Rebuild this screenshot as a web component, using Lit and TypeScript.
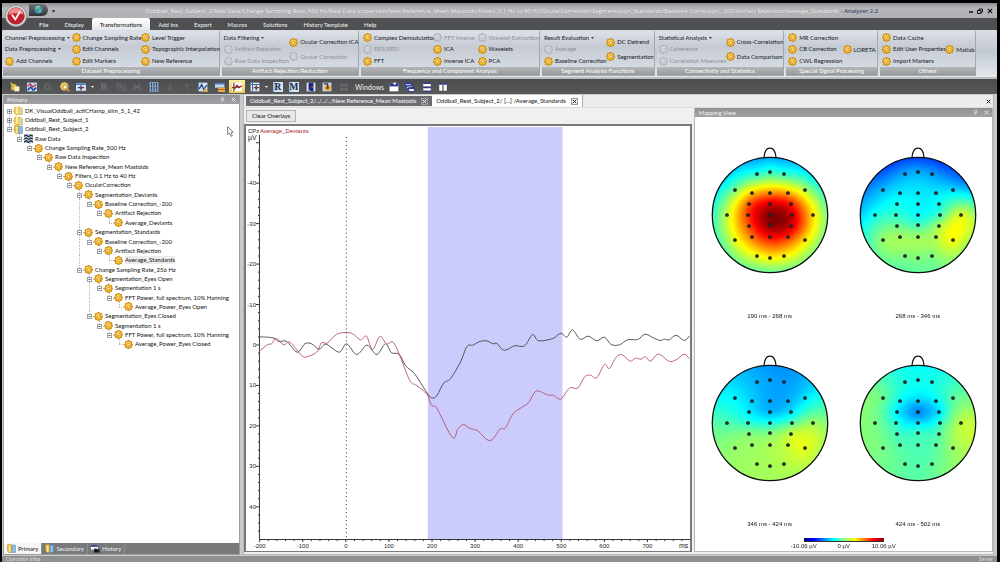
import { LitElement, html, svg, css, nothing } from "lit";
import { customElement, property } from "lit/decorators.js";
import { classMap } from "lit/directives/class-map.js";

type Point = [number, number];

const SENSORS: Point[] = [
  [-13, -41], [0, -43], [14, -41],
  [-35, -25], [-18, -22], [0, -22], [18, -22], [35, -25],
  [-21, -11], [0, -11], [21, -11],
  [-43, 0], [-22, 0], [0, 0], [22, 0], [43, 0],
  [-21, 11], [0, 10], [21, 11],
  [-35, 25], [-18, 22], [0, 22], [18, 22], [35, 25],
  [-13, 41], [0, 43], [14, 41],
];

// Support points on the head outline, clockwise from the nose.
const RIM_ANGLES = [-90, -60, -30, 0, 30, 60, 90, 120, 150, 180, 210, 240];
const RADIUS = 58;
const RIM: Point[] = RIM_ANGLES.map((a) => [
  RADIUS * Math.cos((a * Math.PI) / 180),
  RADIUS * Math.sin((a * Math.PI) / 180),
]);

interface ScalpData {
  label: string;
  sensors: number[];
  rim: number[];
}

const MAPS: ScalpData[] = [
  {
    label: "190 ms - 268 ms",
    sensors: [-0.17, -0.15, -0.15, -0.01, 0.36, 0.48, 0.42, 0.1, 0.58, 0.82, 0.7, 0.13, 0.64, 0.98, 0.84, 0.3,
      0.6, 0.96, 0.84, 0.2, 0.52, 0.74, 0.66, 0.3, 0.22, 0.26, 0.26],
    rim: [-0.42, -0.36, -0.2, -0.02, 0, 0, -0.06, -0.04, -0.1, -0.16, -0.28, -0.38],
  },
  {
    label: "268 ms - 346 ms",
    sensors: [-0.42, -0.42, -0.44, -0.38, -0.29, -0.29, -0.29, -0.32, -0.22, -0.26, -0.22, -0.22, -0.16,
      -0.24, -0.12, 0.18, -0.04, -0.12, 0.08, 0.04, 0.06, 0.06, 0.1, 0.24, 0, 0, 0],
    rim: [-0.63, -0.63, -0.45, 0.04, 0.06, 0, -0.06, -0.06, -0.12, -0.34, -0.52, -0.63],
  },
  {
    label: "346 ms - 424 ms",
    sensors: [-0.4, -0.43, -0.44, -0.26, -0.34, -0.42, -0.4, -0.3, -0.28, -0.39, -0.3, -0.1, -0.16, -0.2,
      -0.08, 0.06, 0.01, 0, 0.14, 0.04, 0.05, 0.08, 0.14, 0.2, 0.07, 0.08, 0.1],
    rim: [-0.46, -0.44, -0.24, 0, 0.1, 0.09, 0.07, 0.06, 0.02, -0.08, -0.26, -0.38],
  },
  {
    label: "424 ms - 502 ms",
    sensors: [-0.2, -0.22, -0.21, -0.05, -0.24, -0.34, -0.26, -0.08, -0.28, -0.48, -0.3, -0.01, -0.18, -0.3,
      -0.16, 0.12, -0.12, -0.14, -0.08, -0.02, -0.09, -0.11, -0.08, 0.05, -0.07, -0.09, -0.06],
    rim: [-0.25, -0.2, -0.05, 0.12, 0.09, 0, -0.07, -0.04, 0, 0.01, 0, -0.16],
  },
];

const kernel = (dx: number, dy: number): number => {
  const r2 = (dx * dx + dy * dy) / (RADIUS * RADIUS);
  return r2 < 1e-9 ? 0 : r2 * Math.log(r2);
};

// Thin-plate spline through the given values.
function spline(points: Point[], values: number[]): (x: number, y: number) => number {
  const n = points.length;
  const size = n + 3;
  const m: number[][] = [];
  for (let i = 0; i < size; i++) m.push(new Array(size + 1).fill(0));
  points.forEach(([x, y], i) => {
    points.forEach(([u, v], j) => (m[i][j] = kernel(x - u, y - v)));
    [1, x / RADIUS, y / RADIUS].forEach((t, k) => {
      m[i][n + k] = t;
      m[n + k][i] = t;
    });
    m[i][size] = values[i];
  });
  for (let c = 0; c < size; c++) {
    let p = c;
    for (let r = c + 1; r < size; r++) if (Math.abs(m[r][c]) > Math.abs(m[p][c])) p = r;
    [m[c], m[p]] = [m[p], m[c]];
    for (let r = 0; r < size; r++) {
      if (r === c) continue;
      const f = m[r][c] / m[c][c];
      if (f) for (let k = c; k <= size; k++) m[r][k] -= f * m[c][k];
    }
  }
  const w = m.map((row, i) => row[size] / row[i]);
  return (x, y) => {
    let s = w[n] + (w[n + 1] * x) / RADIUS + (w[n + 2] * y) / RADIUS;
    for (let i = 0; i < n; i++) s += w[i] * kernel(x - points[i][0], y - points[i][1]);
    return s;
  };
}

function jet(value: number): [number, number, number] {
  const t = Math.max(0, Math.min(1, (value + 1) / 2)) * 4;
  const ramp = (c: number) => Math.round(255 * Math.max(0, Math.min(1, 1.5 - Math.abs(t - c))));
  return [ramp(3), ramp(2), ramp(1)];
}

@customElement("scalp-map")
class ScalpMap extends LitElement {
  @property({ attribute: false }) data!: ScalpData;

  static styles = css`
    :host { display: grid; justify-items: center; align-content: start; }
    .head { display: grid; width: 120px; }
    .field { grid-area: 1 / 1; width: 116px; height: 116px; margin: 12px 2px 2px; border-radius: 50%; }
    .outline { grid-area: 1 / 1; width: 120px; height: 130px; }
    .label { font: 6px/8px "Liberation Sans", Arial, sans-serif; color: #111; margin-top: 37px; }
  `;

  firstUpdated() {
    const canvas = this.renderRoot.querySelector("canvas")!;
    const ctx = canvas.getContext("2d")!;
    const image = ctx.createImageData(116, 116);
    const field = spline([...SENSORS, ...RIM], [...this.data.sensors, ...this.data.rim]);
    for (let y = 0; y < 116; y++) {
      for (let x = 0; x < 116; x++) {
        const [r, g, b] = jet(field(x + 0.5 - RADIUS, y + 0.5 - RADIUS));
        image.data.set([r, g, b, 255], (y * 116 + x) * 4);
      }
    }
    ctx.putImageData(image, 0, 0);
  }

  render() {
    return html`
      <div class="head">
        <canvas class="field" width="116" height="116"></canvas>
        <svg class="outline" viewBox="-60 -70 120 130" fill="none" stroke="#111" stroke-width="1.3">
          <circle r="57.7" />
          <path d="M-6 -57.5C-5 -70 5 -70 6 -57.5" />
          ${SENSORS.map(([x, y]) => svg`<circle cx=${x} cy=${y} r="1.3" fill="#555" stroke-width="1.1" />`)}
        </svg>
      </div>
      <span class="label">${this.data.label}</span>
    `;
  }
}

const BLACK_WAVE: Point[] = [
  [13, 211.3], [27, 212.3], [33, 216], [40.7, 216], [51.3, 226.7], [59, 218.3], [65.7, 218.3], [73.3, 223.7],
  [80, 218.7], [93.3, 226.7], [100.7, 218.3], [110.7, 229], [120, 220], [124, 221.7], [131.3, 229],
  [139.7, 218.3], [145.7, 227.3], [153.3, 228.7], [159.7, 240], [167.3, 246.7], [172.3, 253.3], [182.3, 269],
  [186.7, 272.7], [191.3, 270], [198, 257.7], [204.7, 253.3], [214.7, 236.7], [221.3, 221], [227.3, 219.7],
  [233.3, 216.3], [240.7, 215.3], [247.3, 218.3], [251.3, 218], [256.7, 224], [261.3, 224.3], [269, 220.3],
  [279, 220.3], [287, 209], [293, 215.3], [307.3, 213], [315.3, 207.7], [321.3, 211.7], [327, 204.3],
  [334.7, 213.7], [342.7, 210.7], [351.3, 215.3], [359, 211.7], [365.7, 219], [374, 219.3], [382.3, 214.3],
  [392.3, 214], [399.7, 208.7], [407.3, 212], [414.7, 215], [419, 213.7], [424, 214.3], [430.7, 209.7],
  [439, 215], [444, 210.3],
];

const RED_WAVE: Point[] = [
  [13, 226.3], [21.3, 219.3], [25.7, 218.3], [30, 213], [38, 219.3], [44, 216.7], [55.7, 230], [60.7, 231.3],
  [70.7, 226.7], [75.7, 217.3], [81.3, 217.7], [89, 210], [95.7, 207.3], [105.7, 207.7], [114.7, 214.3],
  [120.7, 210.7], [126.7, 224], [134, 211], [140.7, 218.3], [147.3, 216.7], [154, 230], [164, 255],
  [170.7, 260], [181.3, 269], [185.7, 280], [191.3, 283.3], [206.7, 312.3], [212.3, 303.3], [218, 299.3],
  [224, 303], [232.3, 305.7], [240.7, 314], [246.7, 314.3], [254.7, 303.7], [259.7, 302.7], [267.3, 288.7],
  [276.7, 281.7], [283, 277.3], [290.7, 265.7], [302.3, 269.7], [308, 270], [315.3, 273.7], [324, 262.7],
  [332.3, 262.7], [339, 251.7], [344.7, 249.7], [351.3, 252.3], [359, 239], [364, 243], [370.7, 231.7],
  [376.7, 229.3], [384.7, 235.7], [390, 232.7], [395.7, 233.7], [400, 231.3], [405, 235.7], [411.3, 229.3],
  [415.7, 229.7], [424, 236], [430.7, 234.3], [439, 228.7], [444, 233.3],
];

function smooth(points: Point[]): string {
  let d = `M${points[0].join(" ")}`;
  for (let i = 0; i < points.length - 1; i++) {
    const a = points[Math.max(0, i - 1)];
    const b = points[i];
    const c = points[i + 1];
    const e = points[Math.min(points.length - 1, i + 2)];
    d += `C${b[0] + (c[0] - a[0]) / 6} ${b[1] + (c[1] - a[1]) / 6} ${c[0] - (e[0] - b[0]) / 6} ${
      c[1] - (e[1] - b[1]) / 6
    } ${c[0]} ${c[1]}`;
  }
  return d;
}

@customElement("wave-plot")
class WavePlot extends LitElement {
  static styles = css`
    :host { display: block; min-height: 0; background: #fff; }
    .plot { display: block; width: 100%; height: 100%; font: 6px "Liberation Sans", Arial, sans-serif; fill: #222; }
    .unit { font-size: 7px; }
    .deviant { fill: #a81c30; }
    .end { text-anchor: end; }
    .mid { text-anchor: middle; }
    .line { fill: none; stroke-width: 0.9; }
    .axis { stroke: #333; stroke-width: 1; fill: none; }
  `;

  render() {
    const x = (ms: number) => 100 + ms * 0.4315;
    const y = (uv: number) => 219.5 + uv * 4.055;
    const xTicks = Array.from({ length: 50 }, (_, i) => -200 + i * 20);
    const yTicks = Array.from({ length: 49 }, (_, i) => -50 + i * 2);
    return html`
      <svg class="plot" viewBox="0 0 445 426" preserveAspectRatio="none" role="img" aria-label="CPz waveforms">
        <rect x="182" y="1" width="135" height="413" fill="#cbcbfc" />
        <path class="axis" stroke-dasharray="1 3" d="M100.5 11V414" />
        <path class="axis" d="M13.5 9V414.5H445" />
        <path class="axis" d=${yTicks.map((v) => `M${v % 10 ? 12 : 10} ${y(v)}H13`).join("")} />
        <path class="axis" d=${xTicks.filter((v) => v < 800).map((v) => `M${x(v)} 414V${v % 100 ? 416 : 417}`).join("")} />
        <path class="line" stroke="#444" d=${smooth(BLACK_WAVE)} />
        <path class="line" stroke="#b4506c" d=${smooth(RED_WAVE)} />
        <text x="2" y="7">CPz</text>
        <text class="deviant" x="14" y="7">Average_Deviants</text>
        <text class="unit" x="2" y="14">µV</text>
        ${[-40, -30, -20, -10, 0, 10, 20, 30, 40].map(
          (v) => svg`<text class="end" x="10" y=${y(v) + 2}>${v}</text>`,
        )}
        ${[-200, -100, 0, 100, 200, 300, 400, 500, 600, 700].map(
          (v) => svg`<text class="mid" x=${x(v)} y="423">${v}</text>`,
        )}
        <text class="unit end" x="443" y="423">ms</text>
      </svg>
    `;
  }
}

const gear = (off = false) => html`<svg class="gear" viewBox="-8 -8 16 16" aria-hidden="true">
  <g fill=${off ? "#a9adb4" : "#c4850f"}>
    ${[0, 45, 90, 135].map((a) => svg`<rect x="-2" y="-7.8" width="4" height="15.6" rx="1" transform="rotate(${a})" />`)}
    <circle r="6.2" />
  </g>
  <circle r="5.6" fill=${off ? "#cdd0d5" : "#f7b92c"} />
  <path d="M-3.8 -1A4 4 0 0 1 2 -3.6" fill="none" stroke=${off ? "#e6e8ea" : "#ffe48a"} stroke-width="1.6" />
  <circle r="2.3" fill=${off ? "#e8eaed" : "#fdf6dc"} stroke=${off ? "#a5a9b0" : "#b87c10"} stroke-width="1" />
</svg>`;

interface Command {
  text: string;
  off?: boolean;
  menu?: boolean;
}
interface Group {
  name: string;
  size: number;
  columns: { size: number; items: Command[] }[];
}
const on = (text: string): Command => ({ text });
const off = (text: string): Command => ({ text, off: true });
const menu = (text: string): Command => ({ text, menu: true });

const GROUPS: Group[] = [
  {
    name: "Dataset Preprocessing", size: 218, columns: [
      { size: 67, items: [menu("Channel Preprocessing"), menu("Data Preprocessing"), on("Add Channels")] },
      { size: 70, items: [on("Change Sampling Rate"), on("Edit Channels"), on("Edit Markers")] },
      { size: 78, items: [on("Level Trigger"), on("Topographic Interpolation"), on("New Reference")] },
    ],
  },
  {
    name: "Artifact Rejection/Reduction", size: 138, columns: [
      { size: 67, items: [menu("Data Filtering"), off("Artifact Rejection"), off("Raw Data Inspection")] },
      { size: 70, items: [on("Ocular Correction ICA"), off("Ocular Correction")] },
    ],
  },
  {
    name: "Frequency and Component Analysis", size: 180, columns: [
      { size: 71, items: [on("Complex Demodulation"), off("ERS/ERD"), on("FFT")] },
      { size: 45, items: [off("FFT Inverse"), on("ICA"), on("Inverse ICA")] },
      { size: 62, items: [off("Wavelet Extraction"), on("Wavelets"), on("PCA")] },
    ],
  },
  {
    name: "Segment Analysis Functions", size: 113, columns: [
      { size: 63, items: [menu("Result Evaluation"), off("Average"), on("Baseline Correction")] },
      { size: 48, items: [on("DC Detrend"), on("Segmentation")] },
    ],
  },
  {
    name: "Connectivity and Statistics", size: 128, columns: [
      { size: 68, items: [menu("Statistical Analysis"), off("Coherence"), off("Correlation Measures")] },
      { size: 58, items: [on("Cross-Correlation"), on("Data Comparison")] },
    ],
  },
  {
    name: "Special Signal Processing", size: 92, columns: [
      { size: 55, items: [on("MR Correction"), on("CB Correction"), on("CWL Regression")] },
      { size: 35, items: [on("LORETA")] },
    ],
  },
  {
    name: "Others", size: 96, columns: [
      { size: 64, items: [on("Data Cache"), on("Edit User Properties"), on("Import Markers")] },
      { size: 30, items: [on("Matlab")] },
    ],
  },
];

@customElement("ribbon-bar")
class RibbonBar extends LitElement {
  static styles = css`
    :host {
      display: flex; gap: 2px; height: 49px; box-sizing: border-box; padding: 1px 21px 1px 1px; border-radius: 3px;
      background: linear-gradient(#d9dde3, #c3c9d2 45%, #e3e8ee);
      border-bottom: 2px solid #b9bcc0;
    }
    .group {
      display: flex; flex-direction: column; min-width: 0; box-sizing: border-box;
      border-right: 1px solid #a4a8ae; border-bottom: 1px solid #a4a8ae;
      background: linear-gradient(#dde1e7, #c5cad3 35%, #dbe1e8);
    }
    .columns { flex: 1; display: grid; padding: 1px 0 0 2px; min-height: 0; }
    .column { display: flex; flex-direction: column; justify-content: space-around; min-width: 0; }
    .pair { padding: 3px 0; }
    .command {
      display: flex; align-items: center; gap: 2px; height: 10px; padding: 0; border: 0; background: none;
      font: inherit; color: #14161f; white-space: nowrap; text-align: left;
    }
    .off { color: #8c9097; }
    .gear { width: 9px; height: 9px; flex: none; }
    .arrow { width: 3px; height: 2px; fill: #444; }
    .name {
      height: 8px; line-height: 8px; text-align: center; color: #fff; white-space: nowrap;
      background: linear-gradient(#b4b6b9, #989a9d);
    }
  `;

  render() {
    return GROUPS.map(
      (g) => html`<section class="group" style="flex:${g.size} 1 0" aria-label=${g.name}>
        <div class="columns" style="grid-template-columns:${g.columns.map((c) => `minmax(0,${c.size}fr)`).join(" ")}">
          ${g.columns.map(
            (c) => html`<div class=${classMap({ column: true, pair: c.items.length === 2 })}>
              ${c.items.map(
                (i) => html`<button class=${classMap({ command: true, off: !!i.off })} ?disabled=${!!i.off}>
                  ${i.menu ? nothing : gear(i.off)}<span>${i.text}</span>${
                    i.menu ? html`<svg class="arrow" viewBox="0 0 6 4"><path d="M0 0H6L3 4Z" /></svg>` : nothing
                  }
                </button>`,
              )}
            </div>`,
          )}
        </div>
        <div class="name">${g.name}</div>
      </section>`,
    );
  }
}

interface Node {
  level: number;
  text: string;
  icon: "folder" | "open" | "raw" | "gear";
  box?: "+" | "-";
  selected?: boolean;
}
const step = (level: number, text: string): Node => ({ level, text, icon: "gear", box: "-" });
const leaf = (level: number, text: string, selected = false): Node => ({ level, text, icon: "gear", selected });

const TREE: Node[] = [
  { level: 0, text: "DK_VisualOddball_actiCHamp_slim_5_1_42", icon: "folder", box: "+" },
  { level: 0, text: "Oddball_Rest_Subject_1", icon: "folder", box: "+" },
  { level: 0, text: "Oddball_Rest_Subject_2", icon: "open", box: "-" },
  { level: 1, text: "Raw Data", icon: "raw", box: "-" },
  step(2, "Change Sampling Rate_500 Hz"),
  step(3, "Raw Data Inspection"),
  step(4, "New Reference_Mean Mastoids"),
  step(5, "Filters_0.1 Hz to 40 Hz"),
  step(6, "OcularCorrection"),
  step(7, "Segmentation_Deviants"),
  step(8, "Baseline Correction_-200"),
  step(9, "Artifact Rejection"),
  leaf(10, "Average_Deviants"),
  step(7, "Segmentation_Standards"),
  step(8, "Baseline Correction_-200"),
  step(9, "Artifact Rejection"),
  leaf(10, "Average_Standards", true),
  step(7, "Change Sampling Rate_256 Hz"),
  step(8, "Segmentation_Eyes Open"),
  step(9, "Segmentation 1 s"),
  step(10, "FFT Power, full spectrum, 10% Hanning"),
  leaf(11, "Average_Power_Eyes Open"),
  step(8, "Segmentation_Eyes Closed"),
  step(9, "Segmentation 1 s"),
  step(10, "FFT Power, full spectrum, 10% Hanning"),
  leaf(11, "Average_Power_Eyes Closed"),
];

const hasNext = (index: number, level: number): boolean => {
  const next = TREE.slice(index + 1).find((n) => n.level <= level);
  return !!next && next.level === level;
};

const book = html`<svg class="gear" viewBox="0 0 16 16" aria-hidden="true">
  <path d="M1 1H8V15H3L1 12Z" fill="#f4c33c" stroke="#b58a22" />
  <path d="M9 2H15V15H9Z" fill="#8cc3e8" stroke="#4f86b4" /><path d="M5 3V14" stroke="#fff3b8" stroke-width="2" />
</svg>`;

const NODE_ICONS = {
  gear: gear(),
  open: book,
  folder: html`<svg class="gear" viewBox="0 0 16 16" aria-hidden="true">
    <path d="M1 2H11L15 5V15H3L1 13Z" fill="#f6cf4e" stroke="#c79a28" />
    <path d="M5 2V14" stroke="#fff2b0" stroke-width="3" /><path d="M11 4H14V14H11Z" fill="#bcd9ee" />
  </svg>`,
  raw: html`<svg class="gear" viewBox="0 0 16 16" aria-hidden="true">
    <rect width="16" height="16" fill="#b9c6d6" />
    <path d="M0 4L4 2L8 5L12 2L16 4M0 9L4 7L8 10L12 7L16 9M0 14L4 12L8 15L12 12L16 14" fill="none" stroke="#1d2c44" stroke-width="2" />
  </svg>`,
};

@customElement("node-tree")
class NodeTree extends LitElement {
  static styles = css`
    :host { display: block; }
    .tree { display: grid; grid-auto-rows: 1fr; height: 243px; margin: 0; padding: 2px 0 0; list-style: none; }
    .row { display: flex; align-items: center; white-space: nowrap; color: #111; }
    .cell { width: 10px; height: 10px; margin: -1px 0; flex: none; }
    .guide { stroke: #b5b5b5; stroke-width: 1; fill: none; stroke-dasharray: 1 1; }
    .box { fill: #fff; stroke: #9aa1a8; }
    .gear { width: 9px; height: 9px; flex: none; }
    .text { margin-left: 2px; }
    .selected { background: #ebebeb; }
  `;

  render() {
    return html`<ul class="tree" role="tree">
      ${TREE.map(
        (n, i) => html`<li class="row" role="treeitem" aria-level=${n.level + 1}>
          ${Array.from({ length: n.level }, (_, l) => html`<svg class="cell" viewBox="0 0 10 10">
            ${hasNext(i, l) ? svg`<path class="guide" d="M5.5 0V10" />` : nothing}
          </svg>`)}
          <svg class="cell" viewBox="0 0 10 10">
            <path class="guide" d="M5.5 ${i ? 0 : 5}V${hasNext(i, n.level) ? 10 : 5}M5 5.5H10" />
            ${n.box
              ? svg`<rect class="box" x="3.5" y="3.5" width="4" height="4" />
                <path d="M4.5 5.5H6.5${n.box === "+" ? "M5.5 4.5V6.5" : ""}" stroke="#333" stroke-width=".8" />`
              : nothing}
          </svg>
          ${NODE_ICONS[n.icon]}<span class=${classMap({ text: true, selected: !!n.selected })}>${n.text}</span>
        </li>`,
      )}
    </ul>`;
  }
}

const wave = svg`<rect x="1" y="1" width="14" height="14" fill="#cfe4f7" /><path d="M2 11L6 4L9 12L14 5" fill="none" stroke="#1b3e86" stroke-width="2" />`;
const letter = (fill: string, back: string) => svg`<rect x="0" y="0" width="16" height="16" fill=${back} /><rect x="0" y="0" width="3" height="16" fill=${fill} opacity=".35" />`;

interface Tool {
  name: string;
  art?: unknown;
  glyph?: string;
  dim?: boolean;
  active?: boolean;
  arrow?: boolean;
  label?: boolean;
}

const TOOLS: Tool[] = [
  { name: "Open", art: svg`<path d="M2 3H8L10 5V13H2Z" fill="#e8b53c" /><path d="M7 7H15V15H7Z" fill="#fdf3cf" /><path d="M1 1L6 6" stroke="#c6d63c" stroke-width="2" />` },
  { name: "Overlay", art: svg`<rect x="0" y="1" width="16" height="14" fill="#bcd4ee" /><path d="M1 7L5 3L9 8L15 4" fill="none" stroke="#c22a2a" stroke-width="2" /><path d="M1 13L6 8L10 13L15 9" fill="none" stroke="#1f4aa4" stroke-width="2.4" />` },
  { name: "Search", dim: true, art: svg`<circle cx="7" cy="7" r="4" fill="none" stroke="#8a8a8a" stroke-width="2" /><path d="M10 10L14 14" stroke="#8a8a8a" stroke-width="2" />` },
  { name: "Zoom", art: svg`<circle cx="7" cy="7" r="6.6" fill="#f4ca62" /><circle cx="8" cy="8" r="3.6" fill="#fff6da" stroke="#b07c24" stroke-width="1.4" /><path d="M11 11L15 15" stroke="#d59a3c" stroke-width="2.4" />` },
  { name: "Fit view", art: svg`<rect x="0" y="2" width="16" height="12" fill="#d8e8f8" /><rect x="0" y="2" width="16" height="3" fill="#5386c8" /><path d="M8 5V13M3 9H13" stroke="#20407c" stroke-width="2" /><circle cx="8" cy="9" r="2" fill="#c83030" />` },
  { name: "Fit options", arrow: true },
  { name: "Reset", dim: true, glyph: "R" },
  { name: "Segments", dim: true, art: svg`<path d="M1 2H7V8H1ZM9 8H15V14H9ZM1 14L15 2" fill="#5c6064" stroke="#8b9096" stroke-width="1.4" />` },
  { name: "Markers", dim: true, art: svg`<path d="M2 3L8 8L14 3M2 13L8 8L14 13M3 8H13" fill="none" stroke="#8b9096" stroke-width="2" />` },
  { name: "Channels", art: svg`<rect x="1" y="0" width="14" height="16" fill="#8fa9c6" /><path d="M4 1V15M8 1V15M12 1V15" stroke="#26405f" stroke-width="1.8" stroke-dasharray="5 1" />` },
  { name: "Down", dim: true, art: svg`<path d="M8 2V13M4 9L8 13L12 9" fill="none" stroke="#7f8a5c" stroke-width="2" />` },
  { name: "Up", dim: true, art: svg`<path d="M8 14V3M4 7L8 3L12 7" fill="none" stroke="#7f8a5c" stroke-width="2" />` },
  { name: "Peak view", art: svg`${wave}<path d="M11 8L16 16H9Z" fill="#e8a93a" />` },
  { name: "Grid view", art: svg`<rect x="0" y="2" width="15" height="7" fill="#bfdaf2" /><path d="M0 3H15" stroke="#386cb4" stroke-width="2" /><rect x="5" y="9" width="11" height="7" fill="#f0a93a" /><path d="M5 12H16" stroke="#7c4710" />` },
  { name: "Mapping view", active: true, art: svg`<rect x="0" y="1" width="16" height="14" fill="#fff" /><path d="M3 1V15" stroke="#222" stroke-width="1.6" /><path d="M0 9H4L8 5L11 9L16 6" fill="none" stroke="#b02020" stroke-width="2" /><path d="M4 11L8 8L12 8" fill="none" stroke="#222" stroke-width="1.6" />` },
  { name: "Scale view", art: svg`<rect x="1" y="1" width="14" height="14" fill="#dce9f6" /><path d="M4 1V15M1 4H15" stroke="#3a6cae" stroke-width="1.6" /><path d="M10 5V13M6 9H14" stroke="#4b2b50" stroke-width="2" /><circle cx="10" cy="9" r="1.6" fill="#d03030" />` },
  { name: "Scale options", arrow: true },
  { name: "R view", art: letter("#3b79c4", "#d5e6f6"), glyph: "R" },
  { name: "M view", art: letter("#3b79c4", "#d5e6f6"), glyph: "M" },
  { name: "Door", art: svg`<rect x="1" y="1" width="14" height="14" fill="#dbe6f4" /><path d="M4 1H12V15L4 13Z" fill="#182a78" /><circle cx="10" cy="8" r="1.4" fill="#e05050" />` },
  { name: "Swap", art: svg`<rect x="1" y="1" width="14" height="14" fill="#cadcf0" /><circle cx="9" cy="9" r="5" fill="#eaa52c" /><path d="M3 3H9V7" fill="none" stroke="#23395c" stroke-width="2" /><circle cx="9" cy="9" r="2" fill="#5c3c10" />` },
  { name: "Tiles", dim: true, art: svg`<path d="M2 2H7V7H2ZM9 2H14V7H9ZM2 9H7V14H2ZM9 9H14V14H9Z" fill="#8b9096" />` },
  { name: "Windows", label: true },
  { name: "New window", art: svg`<rect x="1" y="3" width="14" height="12" fill="#fff" /><path d="M1 5H15" stroke="#2233a0" stroke-width="4" /><path d="M7 1H11V4H7Z" fill="#fff" />` },
  { name: "Cascade", art: svg`<g fill="#fff" stroke="#2a3494" stroke-width="1.4"><rect x="1" y="1" width="9" height="6" /><rect x="3" y="5" width="9" height="6" /><rect x="6" y="9" width="9" height="6" /></g><path d="M1 2H10M3 6H12M6 10H15" stroke="#2a3494" stroke-width="2" />` },
  { name: "Tile rows", art: svg`<rect x="2" y="2" width="12" height="5" fill="#fff" /><rect x="2" y="9" width="12" height="5" fill="#fff" /><path d="M2 2H14M2 9H14M2 15H14" stroke="#2a3494" stroke-width="2" />` },
  { name: "Tile columns", art: svg`<rect x="2" y="3" width="5" height="11" fill="#fff" /><rect x="9" y="3" width="5" height="11" fill="#fff" /><path d="M2 3H7M9 3H14" stroke="#2a3494" stroke-width="3" />` },
];

@customElement("tool-strip")
class ToolStrip extends LitElement {
  static styles = css`
    :host { display: flex; height: 15px; padding-left: 6px; background: linear-gradient(#4c4d4f, #56585a); }
    .tools { display: flex; align-items: center; justify-content: space-between; width: 442px; }
    .tool { display: grid; place-items: center; width: 14px; height: 13px; padding: 0; border: 0; background: none; }
    .art { width: 10px; height: 10px; }
    .dim { opacity: 0.4; }
    .active { width: 16px; background: linear-gradient(#fff0a8, #f3c545); }
    .arrow { width: 4px; }
    .label { color: #f0f0f0; font-size: 7px; width: 26px; margin: 0 3px 0 2px; }
    .glyph { font: bold 15px "Liberation Serif", serif; text-anchor: middle; }
  `;

  render() {
    return html`<div class="tools" role="toolbar">
      ${TOOLS.map((t) => {
        if (t.label) return html`<span class="label">${t.name}</span>`;
        if (t.arrow) {
          return html`<button class="tool arrow" aria-label=${t.name}>
            <svg width="3" height="2" viewBox="0 0 6 4"><path d="M0 0H6L3 4Z" fill="#eee" /></svg>
          </button>`;
        }
        return html`<button class=${classMap({ tool: true, dim: !!t.dim, active: !!t.active })} aria-label=${t.name}>
          <svg class="art" viewBox="0 0 16 16">
            ${t.art ?? nothing}
            ${t.glyph ? svg`<text class="glyph" x="8" y="13" fill=${t.dim ? "#a7acb2" : "#182440"}>${t.glyph}</text>` : nothing}
          </svg>
        </button>`;
      })}
    </div>`;
  }
}

const cross = svg`<path d="M1 1L6 6M6 1L1 6" stroke="currentColor" stroke-width="1.4" fill="none" />`;
const pin = svg`<path d="M2 0V4M5 0V4M1 4H6M2 0H5M3.5 4V7" stroke="currentColor" stroke-width=".8" fill="none" />`;

@customElement("app-root")
class AppRoot extends LitElement {
  static styles = css`
    :host {
      display: block; box-sizing: border-box; height: 100vh; padding: 3px 3px 0 2px; overflow: hidden; background: #000;
      font: 6px/8px Lato, "Noto Sans", sans-serif; color: #111;
    }
    .window { display: flex; flex-direction: column; height: 100%; background: #c9cacc; position: relative; }
    button { font: inherit; }
    .titlebar {
      display: flex; align-items: center; height: 15px; padding-right: 3px;
      background: linear-gradient(#8d9094, #b4b6b9 35%, #b0b2b5);
    }
    .quick {
      display: flex; align-items: center; justify-content: center; width: 19px; height: 12px; margin: 0 0 2px 27px;
      border-radius: 0 7px 7px 0; background: linear-gradient(#6d7276, #303437);
    }
    .globe { width: 9px; height: 9px; }
    .quickarrow { width: 10px; text-align: center; color: #333; }
    .title {
      flex: 1; min-width: 0; margin: 0; font-family: "Open Sans", "Noto Sans", sans-serif; font-size: 6px; font-weight: 400;
      line-height: 12px; text-align: center; color: #fff; text-shadow: 0 0 1px #777; white-space: nowrap; overflow: hidden;
    }
    .product { color: #1b2f55; text-shadow: none; }
    .controls { display: flex; gap: 2px; }
    .control { display: grid; place-items: center; width: 8px; height: 9px; padding: 0; border: 0; background: none; color: #111; }
    .orb { position: absolute; left: 3px; top: 2px; width: 22px; height: 22px; padding: 0; border: 0; background: none; }
    .menu { display: flex; align-items: stretch; height: 12px; padding-left: 29px; background: #4e5052; }
    .tab { padding: 0 8px; color: #f4f4f4; text-decoration: none; line-height: 13px; }
    .current { color: #111; background: linear-gradient(#fff, #e4e7eb); border-radius: 2px 2px 0 0; }
    .workspace { flex: 1; display: grid; grid-template-columns: 24fr 76fr; gap: 3px; min-height: 0; padding: 1px 3px 1px 1px; }
    .side { display: flex; flex-direction: column; min-height: 0; border: 1px solid #9b9da0; border-top: 0; background: #fff; }
    .panehead {
      display: flex; align-items: center; gap: 6px; height: 9px; padding: 0 3px;
      background: linear-gradient(#8f9194, #a0a2a4); color: #f2f2f2;
    }
    .panehead > span { flex: 1; }
    .mini { width: 5px; height: 5px; }
    .grow { flex: 1; min-height: 0; }
    .sidetabs { display: flex; height: 11px; background: #77797b; }
    .sidetab {
      display: flex; align-items: center; gap: 2px; padding: 0 3px; border: 0; border-right: 1px solid #8e9092;
      background: none; color: #f0f0f0;
    }
    .chosen { background: #f6f6f6; color: #111; }
    .gear { width: 9px; height: 9px; }
    .document {
      display: flex; flex-direction: column; min-width: 0; min-height: 0; padding-bottom: 2px;
      background: #f0f0f0; border: 1px solid #b5b7b9; border-top: 0;
    }
    .doctabs { display: flex; align-items: center; height: 12px; padding: 0 2px; background: #ececec; border-bottom: 1px solid #dcdcdc; }
    .doctab { display: flex; align-items: center; gap: 5px; height: 10px; padding: 0 4px; border: 0; background: #6b6d70; color: #fff; white-space: nowrap; }
    .front { background: #fff; color: #111; border-right: 1px solid #aaa; height: 12px; }
    .close { display: grid; place-items: center; width: 5px; height: 5px; border: 1px solid #9a9a9a; }
    .spacer { flex: 1; }
    .panes { flex: 1; display: grid; grid-template-columns: 449fr 299fr; gap: 2px; min-height: 0; }
    .left { display: flex; flex-direction: column; min-height: 0; }
    .actions { height: 16px; padding: 2px 2px 0; box-sizing: border-box; }
    .clear { display: block; height: 12px; padding: 0 5px; border: 1px solid #b4b4b4; background: #e9e9e9; color: #111; line-height: 10px; }
    .plotframe { flex: 1; min-height: 0; display: grid; border: 1px solid #77797c; border-width: 2px 2px 1px 2px; }
    .mapping { display: flex; flex-direction: column; min-height: 0; background: #fff; border: 1px solid #b5b7b9; border-width: 0 1px 1px; }
    .maps { flex: 1; display: grid; grid-template: repeat(2, 208px) / 1fr 1fr; padding: 28px 0 0; min-height: 0; }
    .legend {
      display: grid; grid-template-columns: 40px 40px 40px; justify-content: center; justify-items: center;
      font: 6px/7px "Liberation Sans", Arial, sans-serif; color: #222; white-space: nowrap; padding-bottom: 1px;
    }
    .bar {
      grid-column: 1 / -1; width: 80px; height: 3px; margin-bottom: 1px; border-bottom: 1px solid #333;
      background: linear-gradient(90deg, #000080, #00f 12%, #0ff 37%, #8f8 50%, #ff0 63%, #f00 87%, #900000);
    }
    .status { display: flex; justify-content: space-between; height: 6px; padding: 0 4px; background: #8e9092; color: #ddd; font-size: 5px; line-height: 6px; }
    .cursor { position: absolute; left: 225px; top: 123px; width: 7px; height: 11px; }
  `;

  render() {
    const tabs = ["File", "Display", "Transformations", "Add Ins", "Export", "Macros", "Solutions", "History Template", "Help"];
    return html`
      <div class="window">
        <header class="titlebar">
          <div class="quick">
            <svg class="globe" viewBox="0 0 16 16">
              <circle cx="8" cy="8" r="7" fill="#3b8fd6" />
              <path d="M4 3Q8 0 11 3L9 7L5 8L3 6ZM8 9L13 8L12 13L8 14Z" fill="#6cc44c" />
              <path d="M2 6Q5 2 9 2" stroke="#d3ecff" fill="none" />
            </svg>
          </div>
          <span class="quickarrow">▾</span>
          <h1 class="title">Oddball_Rest_Subject_2/Raw Data/Change Sampling Rate_500 Hz/Raw Data Inspection/New Reference_Mean Mastoids/Filters_0.1 Hz to 40 Hz/OcularCorrection/Segmentation_Standards/Baseline Correction_-200/Artifact Rejection/Average_Standards <span class="product">- Analyzer 2.2</span></h1>
          <div class="controls">
            <button class="control" aria-label="Minimize"><svg width="5" height="5"><path d="M1 4H5" stroke="#111" stroke-width="1.5" /></svg></button>
            <button class="control" aria-label="Restore"><svg width="6" height="6" fill="none" stroke="#111"><path d="M2 2V1H5.5V4H4M.5 2.5H4V5.5H.5Z" /></svg></button>
            <button class="control" aria-label="Close"><svg width="6" height="6" viewBox="0 0 7 7">${cross}</svg></button>
          </div>
        </header>
        <nav class="menu">
          ${tabs.map((t) => html`<a href="#" class=${classMap({ tab: true, current: t === "Transformations" })}>${t}</a>`)}
        </nav>
        <ribbon-bar></ribbon-bar>
        <tool-strip></tool-strip>
        <main class="workspace">
          <aside class="side">
            <div class="panehead">
              <span>Primary</span>
              <svg class="mini" viewBox="0 0 7 7">${pin}</svg><svg class="mini" viewBox="0 0 7 7">${cross}</svg>
            </div>
            <node-tree class="grow"></node-tree>
            <div class="sidetabs">
              <button class="sidetab chosen">${book}Primary</button>
              <button class="sidetab">${book}Secondary</button>
              <button class="sidetab">
                <svg class="gear" viewBox="0 0 16 16"><rect x="0" y="2" width="12" height="8" fill="#fff" /><rect y="2" width="12" height="3" fill="#26348c" /><path d="M6 8H10L11 10L15 9V15H5Z" fill="#151515" /></svg>History
              </button>
            </div>
          </aside>
          <section class="document">
            <div class="doctabs">
              <button class="doctab">Oddball_Rest_Subject_2/../../../New Reference_Mean Mastoids<span class="close"><svg class="mini" viewBox="0 0 7 7">${cross}</svg></span></button>
              <button class="doctab front">Oddball_Rest_Subject_2/ [...] /Average_Standards<span class="close"><svg class="mini" viewBox="0 0 7 7">${cross}</svg></span></button>
              <span class="spacer"></span>
              <svg class="mini" viewBox="0 0 7 7">${cross}</svg>
            </div>
            <div class="panes">
              <div class="left">
                <div class="actions"><button class="clear">Clear Overlays</button></div>
                <div class="plotframe"><wave-plot></wave-plot></div>
              </div>
              <div class="mapping">
                <div class="panehead">
                  <span>Mapping View</span>
                  <svg class="mini" viewBox="0 0 7 7">${pin}</svg><svg class="mini" viewBox="0 0 7 7">${cross}</svg>
                </div>
                <div class="maps">${MAPS.map((m) => html`<scalp-map .data=${m}></scalp-map>`)}</div>
                <div class="legend"><div class="bar"></div><span>-10.06 µV</span><span>0 µV</span><span>10.06 µV</span></div>
              </div>
            </div>
          </section>
        </main>
        <footer class="status"><span>Operation Infos</span><span>Server</span></footer>
        <button class="orb" aria-label="Application menu">
          <svg viewBox="0 0 32 32" width="22" height="22">
            <circle cx="16" cy="16" r="15.5" fill="#d9dbde" stroke="#777" />
            <circle cx="16" cy="16" r="12" fill="#c81e2a" stroke="#8e1018" />
            <path d="M5 14A11 10 0 0 1 27 14Q16 10 5 14Z" fill="#ee8a8e" />
            <path d="M10 14L15 21L22 9" fill="none" stroke="#fff" stroke-width="2.6" />
          </svg>
        </button>
        <svg class="cursor" viewBox="0 0 12 19"><path d="M1 1V15L4 12L7 18L9 17L7 11H11Z" fill="#fff" stroke="#333" /></svg>
      </div>
    `;
  }
}
